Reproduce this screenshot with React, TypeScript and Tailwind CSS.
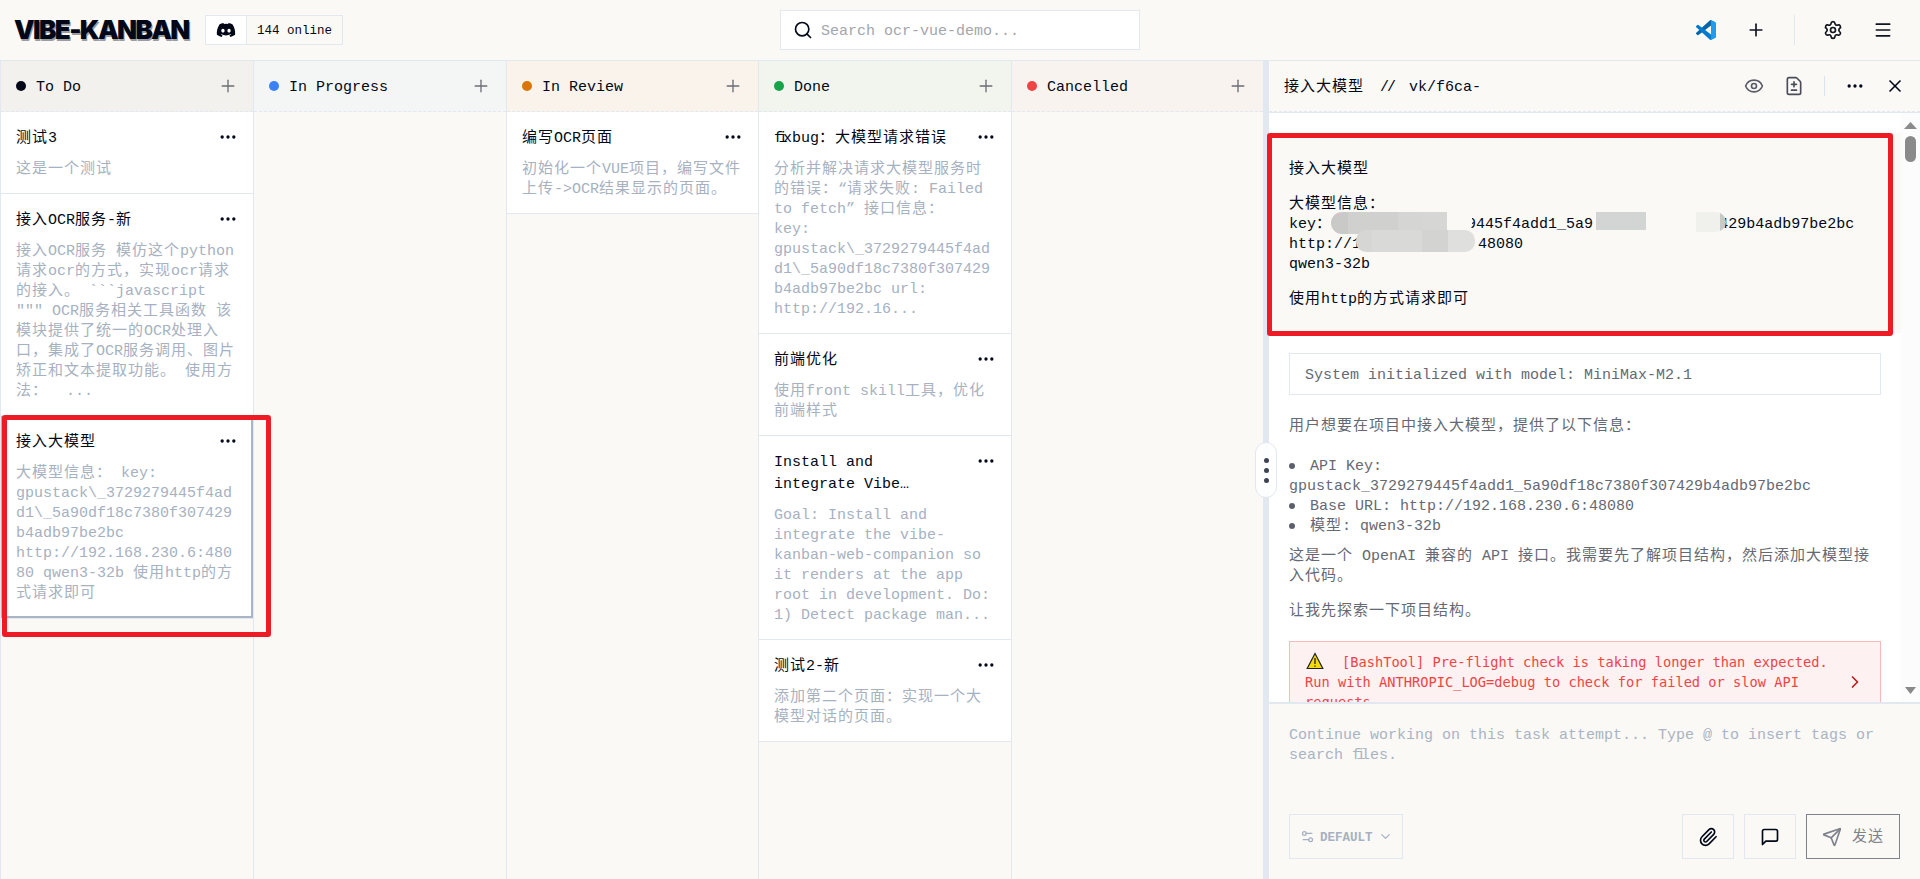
import React from 'react'
import { ChevronDown, ChevronRight, Ellipsis, Eye, FileDiff, Menu, Paperclip, Plus, Search, Send, Settings, Settings2, X } from 'lucide-react'
import { FaDiscord } from 'react-icons/fa'

type Task = { title: string; body: string; selected?: boolean }
type Column = { name: string; dot: string; header: string; tasks: Task[] }

const columns: Column[] = [
  {
    name: 'To Do',
    dot: 'bg-[#020817]',
    header: 'bg-[#f2f1ed]',
    tasks: [
      { title: '测试3', body: '这是一个测试' },
      {
        title: '接入OCR服务-新',
        body: '接入OCR服务 模仿这个python\n请求ocr的方式，实现ocr请求\n的接入。 ```javascript\n""" OCR服务相关工具函数 该\n模块提供了统一的OCR处理入\n口，集成了OCR服务调用、图片\n矫正和文本提取功能。 使用方\n法：  ...',
      },
      {
        title: '接入大模型',
        body: '大模型信息： key:\ngpustack\\_3729279445f4ad\nd1\\_5a90df18c7380f307429\nb4adb97be2bc\nhttp://192.168.230.6:480\n80 qwen3-32b 使用http的方\n式请求即可',
        selected: true,
      },
    ],
  },
  { name: 'In Progress', dot: 'bg-[#3b82f6]', header: 'bg-[#f4f5f5]', tasks: [] },
  {
    name: 'In Review',
    dot: 'bg-[#d97706]',
    header: 'bg-[#f9f3ec]',
    tasks: [{ title: '编写OCR页面', body: '初始化一个VUE项目，编写文件\n上传->OCR结果显示的页面。' }],
  },
  {
    name: 'Done',
    dot: 'bg-[#16a34a]',
    header: 'bg-[#f2f4ee]',
    tasks: [
      {
        title: 'fixbug：大模型请求错误',
        body: '分析并解决请求大模型服务时\n的错误：“请求失败: Failed\nto fetch” 接口信息：\nkey:\ngpustack\\_3729279445f4ad\nd1\\_5a90df18c7380f307429\nb4adb97be2bc url:\nhttp://192.16...',
      },
      { title: '前端优化', body: '使用front skill工具，优化\n前端样式' },
      {
        title: 'Install and\nintegrate Vibe…',
        body: 'Goal: Install and\nintegrate the vibe-\nkanban-web-companion so\nit renders at the app\nroot in development. Do:\n1) Detect package man...',
      },
      { title: '测试2-新', body: '添加第二个页面：实现一个大\n模型对话的页面。' },
    ],
  },
  { name: 'Cancelled', dot: 'bg-[#ef4444]', header: 'bg-[#f9f3ef]', tasks: [] },
]

// Full-width characters sit on a 16px pitch, latin ones on a 9px pitch,
// and "fi" shares a single latin cell
function Mixed({ text }: { text: string }) {
  return (
    <>
      {text.split(/([\u3001-\u9fff\uff00-\uffef]+|fi)/).map((part, i) => {
        if (i % 2 === 0) return part
        return <span key={i} className={part === 'fi' ? 'tracking-[-4.5px]' : 'tracking-[1px]'}>{part}</span>
      })}
    </>
  )
}

function TaskCard({ task }: { task: Task }) {
  return (
    <div className={`relative border-b border-[#e2e8f0] bg-white pt-4 pr-[17px] pl-[15px] ${task.selected ? 'pb-[14px]' : 'pb-[13px]'}`}>
      <div className="flex items-start justify-between">
        <h3 className="whitespace-pre leading-[22px] text-[#020817]">
          <Mixed text={task.title} />
        </h3>
        <Ellipsis size={20} className="-mr-[2px] -mt-[1px] shrink-0 text-[#020817]" />
      </div>
      <p className="mt-[10px] whitespace-pre leading-5 text-[#a6b1c1]">
        <Mixed text={task.body} />
      </p>
      {task.selected && <div className="absolute inset-0 border-2 border-[#a9b4c4]" />}
    </div>
  )
}

function BoardColumn({ column }: { column: Column }) {
  return (
    <section className="border-l border-[#e2e8f0]">
      <div className={`flex h-[51px] items-center justify-between border-b border-dashed border-[#e2e8f0] pl-[15px] pr-[15px] ${column.header}`}>
        <div className="flex items-center gap-[10px]">
          <span className={`size-[10px] rounded-full ${column.dot}`} />
          <span className="mt-[3px] text-[#020817]">{column.name}</span>
        </div>
        <Plus size={20} strokeWidth={1.6} className="text-[#6b6e74]" />
      </div>
      {column.tasks.map((task) => (
        <TaskCard key={task.title} task={task} />
      ))}
    </section>
  )
}

function VSCodeIcon() {
  return (
    <svg width="20" height="20" viewBox="0 0 100 100">
      <path fill="#0065a9" d="M96.5 10.8 75.9.9a6.2 6.2 0 0 0-7.1 1.2L1.3 63.6a4.2 4.2 0 0 0 0 6.1l5.5 5a4.2 4.2 0 0 0 5.3.3l81.3-61.7c2.7-2.1 6.6-.1 6.6 3.3v-.2a6.3 6.3 0 0 0-3.5-5.6z" />
      <path fill="#007acc" d="M96.5 89.2 75.9 99.1a6.2 6.2 0 0 1-7.1-1.2L1.3 36.4a4.2 4.2 0 0 1 0-6.1l5.5-5a4.2 4.2 0 0 1 5.3-.3l81.3 61.7c2.7 2.1 6.6.1 6.6-3.3v.2a6.3 6.3 0 0 1-3.5 5.6z" />
      <path fill="#1f9cf0" d="M75.9 99.1a6.2 6.2 0 0 1-7.1-1.2c2.3 2.3 6.2.7 6.2-2.6V4.7c0-3.3-3.9-4.9-6.2-2.6a6.2 6.2 0 0 1 7.1-1.2l20.6 9.9a6.3 6.3 0 0 1 3.5 5.6v67.2a6.3 6.3 0 0 1-3.5 5.6z" />
    </svg>
  )
}

function TopBar() {
  return (
    <header className="flex h-[61px] items-center justify-between border-b border-[#e2e8f0]">
      <div className="flex w-[780px] items-center pl-[15px]">
        <span className="-ml-px -mt-px w-[191px] whitespace-nowrap font-[Inter] text-[26px] font-black leading-[30px] tracking-[-1.6px] text-[#020817] [text-shadow:1px_2px_0_#9b9da3]">
          VIBE-KANBAN
        </span>
        <div className="flex h-[30px] border border-[#e2e8f0] text-[12.5px] font-medium text-[#020817]">
          <span className="flex w-[41px] items-center justify-center border-r border-[#e2e8f0] bg-white">
            <FaDiscord size={20} />
          </span>
          <span className="flex w-[95px] items-center pl-[10px] pt-px">144 online</span>
        </div>
      </div>
      <div className="flex h-10 w-[360px] items-center gap-2 border border-[#e2e8f0] bg-white pl-3">
        <Search size={20} className="text-[#020817]" />
        <span className="mt-[3px] text-[#a3a6ac]">Search ocr-vue-demo...</span>
      </div>
      <div className="flex w-[780px] items-center justify-end pr-[27px] text-[#10141f]">
        <VSCodeIcon />
        <Plus size={20} className="ml-[30px]" />
        <span className="ml-7 h-[30px] w-px bg-[#e2e8f0]" />
        <Settings size={20} className="ml-7" />
        <Menu size={20} className="ml-[30px]" />
      </div>
    </header>
  )
}

function AttemptHeader() {
  return (
    <div className="border-b border-[#e2e8f0]">
      <div className="flex h-[51px] items-center border-b border-dashed border-[#e2e8f0] pl-[15px] pr-[15px] text-[#020817]">
        <span className="mt-[3px]"><Mixed text="接入大模型" /></span>
        <span className="ml-4 mt-[3px] tracking-[-2px]">//</span>
        <span className="ml-[15px] mt-[3px]">vk/f6ca-</span>
        <Eye size={20} className="ml-auto text-[#5a5d66]" />
        <FileDiff size={20} className="ml-5 text-[#4a4e58]" />
        <span className="ml-5 h-5 w-px bg-[#dbe2f0]" />
        <Ellipsis size={20} className="ml-5" />
        <X size={20} className="ml-5" />
      </div>
    </div>
  )
}

function UserMessage() {
  return (
    <div className="relative h-[200px] shrink-0 bg-[#faf9f6] px-5 pt-[27px] leading-5 text-[#020817]">
      <p><Mixed text="接入大模型" /></p>
      <p className="mt-[15px]"><Mixed text="大模型信息：" /></p>
      <p>
        <Mixed text="key：" /><span className="invisible">gpustack_372927</span>9445f4add1_5a9<span className="invisible">0df18c7380f307</span>429b4adb97be2bc
      </p>
      <p>
        http://1<span className="invisible">92.168.230.6:</span>48080
      </p>
      <p>qwen3-32b</p>
      <p className="mt-[15px]"><Mixed text="使用http的方式请求即可" /></p>
      {/* masked parts of the key and the address */}
      <div className="absolute left-[62px] top-[79px] h-[22px] w-[141px] rounded-l-[12px] rounded-br-[10px] bg-[linear-gradient(90deg,#c9c9c8_0_17px,#d0d0cf_17px_67px,#d5d5d4_67px_91px,#d6d6d5_91px_116px,#faf9f6_116px)]" />
      <div className="absolute left-[87px] top-[97px] h-[22px] w-[119px] rounded-[10px] bg-[linear-gradient(90deg,#d6d6d4_0_16px,#d9d9d7_16px_66px,#d3d3d1_66px_92px,#dfdfdd_92px)]" />
      <div className="absolute left-[327px] top-[79px] h-[18px] w-[50px] bg-[#d3d5d4]" />
      <div className="absolute left-[427px] top-[79px] h-5 w-[30px] rounded-r-[10px] bg-[linear-gradient(90deg,#f0f0ed_0_24px,#c9c9c8_24px)]" />
    </div>
  )
}

function Bullet({ text }: { text: string }) {
  return (
    <li className="flex items-center gap-[15px]">
      <span className="-mt-[2px] size-[6px] rounded-full bg-[#5c606a]" />
      <span><Mixed text={text} /></span>
    </li>
  )
}

function ErrorEntry() {
  return (
    <div className="mx-5 mt-[19px] flex w-[592px] shrink-0 items-center border border-[#f8b9b9] bg-[#fef1f1] pt-[10px] pb-3 pl-[15px] pr-[15px] font-['DejaVu_Sans_Mono'] text-[13.68px] leading-5 text-[#ef4444]">
      <div className="flex-1 whitespace-pre">
        <svg width="18" height="18" viewBox="0 0 18 18" className="mr-[18px] ml-[1px] inline-block align-[-3px]">
          <path d="M9 1.5 16.8 16.5H1.2z" fill="#f5d90a" stroke="#222" strokeWidth="1.2" />
          <path d="M9 6v6M9 13.5v1.3" stroke="#222" strokeWidth="1.3" />
        </svg>
        {'[BashTool] Pre-flight check is taking longer than expected.\nRun with ANTHROPIC_LOG=debug to check for failed or slow API\nrequests.'}
      </div>
      <ChevronRight size={20} className="text-[#b91c1c]" />
    </div>
  )
}

function Conversation() {
  return (
    <div className="flex h-[589px] bg-white">
      <div className="flex w-[632px] flex-col overflow-hidden pt-5 leading-5 text-[#656973]">
        <UserMessage />
        <div className="mx-5 mt-5 flex h-[42px] w-[592px] shrink-0 items-center border border-[#e2e8f0] pt-1 pl-[15px]">
          System initialized with model: MiniMax-M2.1
        </div>
        <p className="mt-[22px] px-5"><Mixed text="用户想要在项目中接入大模型，提供了以下信息：" /></p>
        <ul className="mt-5 px-5">
          <Bullet text="API Key:" />
          <li>gpustack_3729279445f4add1_5a90df18c7380f307429b4adb97be2bc</li>
          <Bullet text="Base URL: http://192.168.230.6:48080" />
          <Bullet text="模型: qwen3-32b" />
        </ul>
        <p className="mt-[10px] whitespace-pre px-5">
          <Mixed text={'这是一个 OpenAI 兼容的 API 接口。我需要先了解项目结构，然后添加大模型接\n入代码。'} />
        </p>
        <p className="mt-[15px] px-5"><Mixed text="让我先探索一下项目结构。" /></p>
        <ErrorEntry />
      </div>
      <div className="flex w-[19px] flex-col items-center bg-[#fcfcfc] pb-2 pt-[9px]">
        <svg width="13" height="7" viewBox="0 0 13 7"><path d="M0 7 6.5 0 13 7z" fill="#8a8a8a" /></svg>
        <span className="mt-[7px] h-[26px] w-[11px] rounded-full bg-[#8a8a8a]" />
        <svg width="11" height="7" viewBox="0 0 11 7" className="mt-auto"><path d="M0 0h11L5.5 7z" fill="#8a8a8a" /></svg>
      </div>
    </div>
  )
}

function FollowUp() {
  return (
    <div className="flex flex-1 flex-col border-t-2 border-[#e2e8f0] px-5 pb-5 pt-[22px]">
      <p className="whitespace-pre leading-5 text-[#a9b4c2]">
        <Mixed text={'Continue working on this task attempt... Type @ to insert tags or\nsearch files.'} />
      </p>
      <div className="mt-auto flex h-[45px] gap-[10px]">
        <button className="mr-auto flex w-[114px] items-center border border-[#e2e8f0] pl-[10px] text-[12.5px] font-bold text-[#a6b1c1]">
          <Settings2 size={15} />
          <span className="ml-[5px] mr-[5px] mt-[2px]">DEFAULT</span>
          <ChevronDown size={15} />
        </button>
        <button className="flex w-[52px] items-center justify-center border border-[#e2e8f0] text-[#020817]">
          <Paperclip size={20} />
        </button>
        <button className="flex w-[52px] items-center justify-center border border-[#e2e8f0] text-[#020817]">
          {/* square bubble, tail at the lower left */}
          <svg width="20" height="20" viewBox="0 0 24 24" fill="none" stroke="currentColor" strokeWidth="2" strokeLinecap="round" strokeLinejoin="round">
            <path d="M21 15a2 2 0 0 1-2 2H7l-4 4V5a2 2 0 0 1 2-2h14a2 2 0 0 1 2 2z" />
          </svg>
        </button>
        <button className="flex w-[94px] items-center border border-[#7e828a] pl-[15px] text-[#7e828a]">
          <Send size={20} />
          <span className="ml-[10px] mt-[3px]"><Mixed text="发送" /></span>
        </button>
      </div>
    </div>
  )
}

function App() {
  return (
    <div className="relative flex h-[879px] w-[1920px] flex-col overflow-hidden bg-[#faf9f6] font-['Liberation_Mono','Noto_Sans_CJK_SC',monospace] text-[15px] leading-5">
      <TopBar />
      <div className="flex flex-1">
        <main className="grid w-[1263px] grid-cols-[253px_253px_252px_253px_252px]">
          {columns.map((column) => (
            <BoardColumn key={column.name} column={column} />
          ))}
        </main>
        <div className="relative w-[6px] bg-[#e2e8f0]">
          <div className="absolute -left-2 top-[381px] flex h-14 w-[22px] flex-col items-center justify-center gap-[5px] rounded-full border border-[#e2e8f0] bg-white/90">
            <span className="size-[5px] rounded-full bg-[#3d4352]" />
            <span className="size-[5px] rounded-full bg-[#3d4352]" />
            <span className="size-[5px] rounded-full bg-[#3d4352]" />
          </div>
        </div>
        <aside className="flex w-[651px] flex-col">
          <AttemptHeader />
          <Conversation />
          <FollowUp />
        </aside>
      </div>

      {/* highlight frames */}
      <div className="absolute left-[2px] top-[415px] h-[222px] w-[269px] rounded-[3px] border-[5px] border-[#ed1c24]" />
      <div className="absolute left-[1267px] top-[133px] h-[203px] w-[626px] rounded-[3px] border-[5px] border-[#ed1c24]" />
    </div>
  )
}

export default App
